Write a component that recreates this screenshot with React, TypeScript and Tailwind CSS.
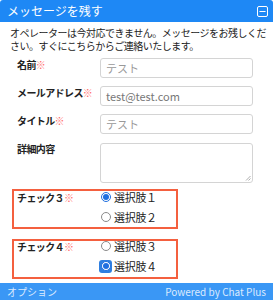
import { Minus } from "lucide-react"

const font = { fontFamily: '"Noto Sans CJK JP", "Noto Sans", sans-serif' }

function Req() {
  return <span className="text-[#ff6b6b] font-normal">※</span>
}

function Radio({ checked, focus, label }: { checked?: boolean; focus?: boolean; label: string }) {
  return (
    <div className="flex items-center h-[20px] gap-[2px] text-[11px] leading-[12px] text-[#222]">
      <span className={["grid place-items-center h-[13px] w-[13px] -ml-[1px]", focus ? "rounded-[3px] bg-[#2f7fe0]" : ""].join(" ")}>
        <span
          className={[
            "grid place-items-center h-[10px] w-[10px] rounded-full border bg-white",
            checked ? "border-[#1f6fe0]" : "border-[#8a8a8a]",
          ].join(" ")}
        >
          {checked && <span className="h-[6px] w-[6px] rounded-full bg-[#1f6fe0]" />}
        </span>
      </span>
      <span className="tracking-[-0.3px]">{label}</span>
    </div>
  )
}

function Field({ label, req, placeholder, dark }: { label: string; req?: boolean; placeholder: string; dark?: boolean }) {
  return (
    <div className="flex items-start">
      <div className="w-[100px] pl-[17px] pt-[1px] text-[10px] leading-[12px] font-bold text-[#222] whitespace-nowrap tracking-[-0.6px]">
        {label}
        {req && <Req />}
      </div>
      <div className="w-[153px] h-[20px] rounded-[3px] border border-[#d4d4d4] bg-white px-[5px] flex items-center">
        <span className={["text-[11px] leading-[12px]", dark ? "text-[#777]" : "text-[#999]"].join(" ")}>{placeholder}</span>
      </div>
    </div>
  )
}

export default function App() {
  return (
    <div className="w-[273px] h-[300px] bg-white flex flex-col overflow-hidden" style={font}>
      <div className="h-[22px] shrink-0 bg-[#1e88f5] flex items-center justify-between pl-[7px] pr-[5px] rounded-t-[3px]">
        <span className="text-white text-[12px] leading-[14px]">メッセージを残す</span>
        <span className="grid place-items-center h-[11px] w-[11px] border border-white rounded-[2px]">
          <Minus className="h-[9px] w-[9px] text-white" strokeWidth={3} />
        </span>
      </div>

      <div className="px-[10px] pt-[4px] text-[10px] leading-[13px] text-[#222] tracking-[-0.5px] whitespace-nowrap">
        <div>オペレーターは今対応できません。メッセージをお残しくだ</div>
        <div>さい。すぐにこちらからご連絡いたします。</div>
      </div>

      <div className="flex flex-col gap-[8px] mt-[6px]">
        <Field label="名前" req placeholder="テスト" />
        <Field label="メールアドレス" req placeholder="test@test.com" dark />
        <Field label="タイトル" req placeholder="テスト" />
        <div className="flex items-start mt-[1px]">
          <div className="w-[100px] pl-[17px] text-[10px] leading-[12px] font-bold text-[#222] tracking-[-0.6px]">詳細内容</div>
          <div className="relative w-[153px] h-[40px] rounded-[3px] border border-[#d4d4d4] bg-white">
            <svg className="absolute right-[1px] bottom-[1px]" width="6" height="6" viewBox="0 0 6 6">
              <path d="M1 5.5 L5.5 1 M3.5 5.5 L5.5 3.5" stroke="#999" strokeWidth="0.8" />
            </svg>
          </div>
        </div>
      </div>

      <div className="flex flex-col gap-[10px] mt-[6px] ml-[12px]">
        <div className="w-[166px] h-[40px] border-2 border-[#f4603f] flex">
          <div className="w-[86px] pl-[3px] pt-[1px] text-[10px] leading-[12px] font-bold text-[#222] tracking-[-0.6px]">
            チェック３<Req />
          </div>
          <div className="flex flex-col -mt-[4px]">
            <Radio checked label="選択肢１" />
            <Radio label="選択肢２" />
          </div>
        </div>
        <div className="w-[166px] h-[40px] border-2 border-[#f4603f] flex">
          <div className="w-[86px] pl-[3px] text-[10px] leading-[12px] font-bold text-[#222] tracking-[-0.6px]">
            チェック４<Req />
          </div>
          <div className="flex flex-col -mt-[5px]">
            <Radio label="選択肢３" />
            <Radio checked focus label="選択肢４" />
          </div>
        </div>
      </div>

      <div className="mt-auto h-[17px] shrink-0 bg-[#3a97f5] flex items-center justify-between px-[7px] text-[10px] leading-[12px] text-[#dbeafe]">
        <span>オプション</span>
        <span>Powered by Chat Plus</span>
      </div>
    </div>
  )
}
